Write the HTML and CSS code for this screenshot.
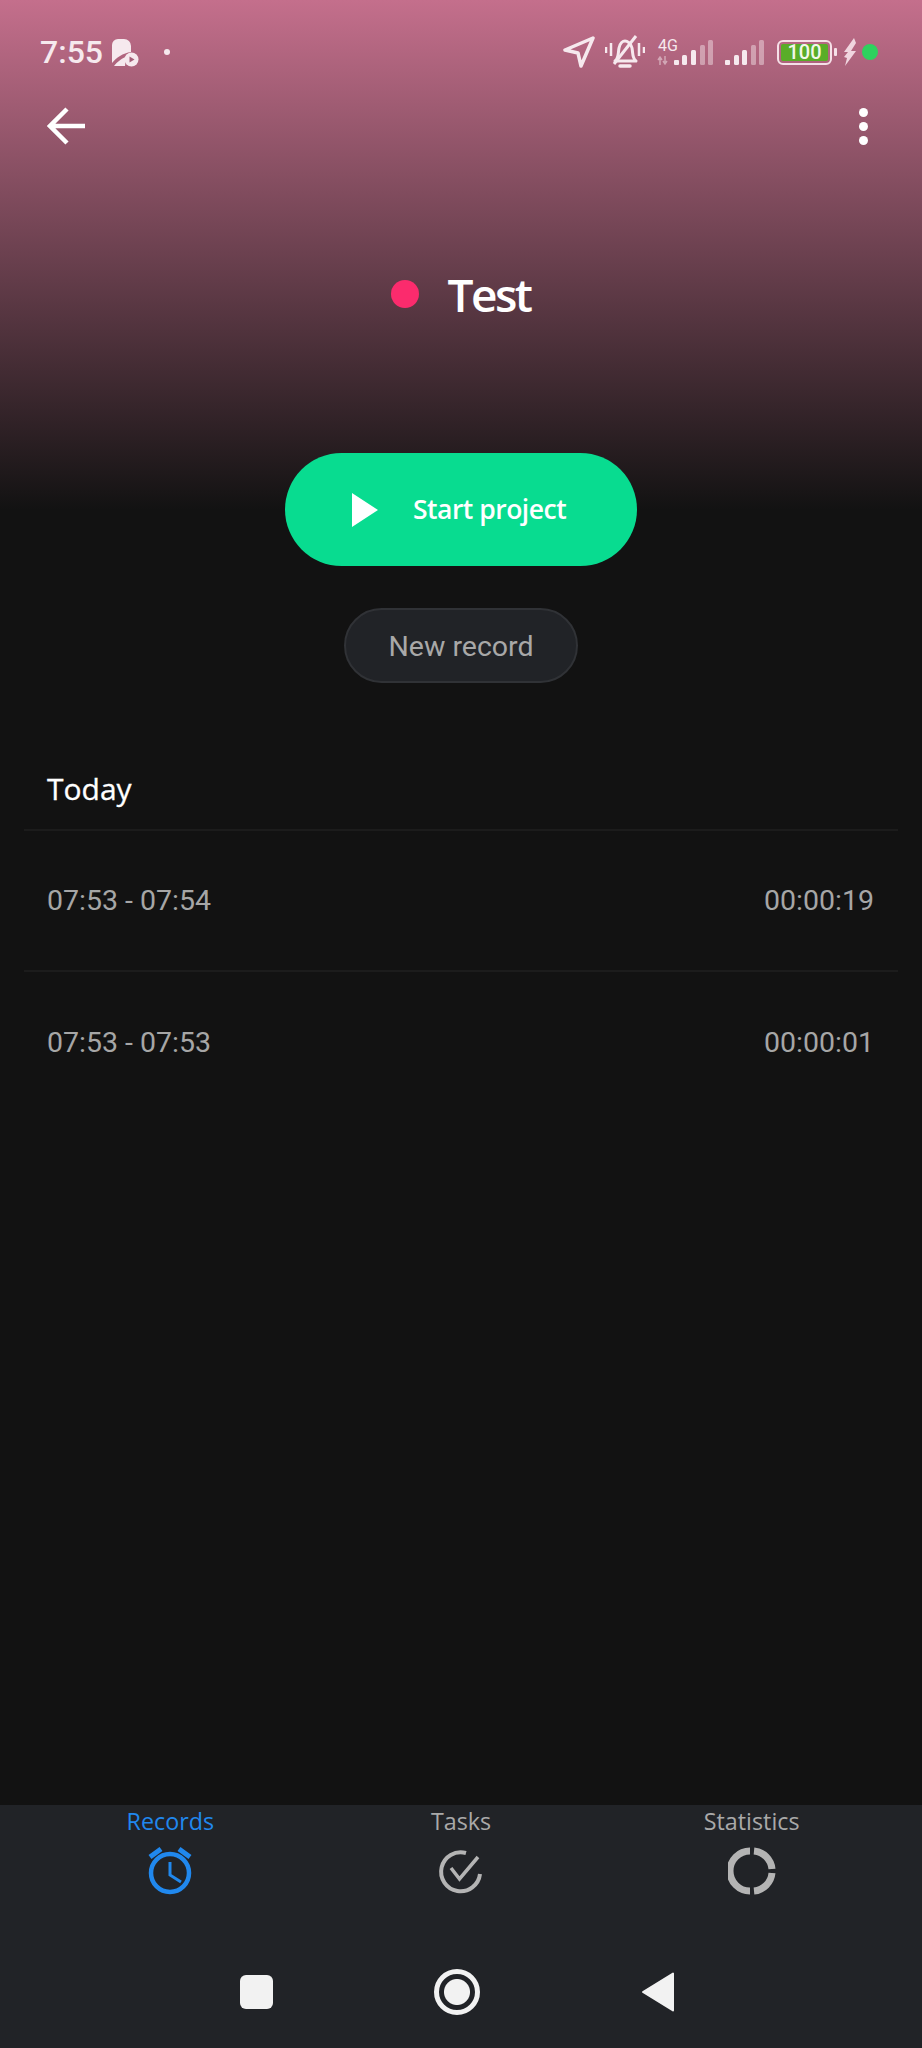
FILE: index.html
```html
<!DOCTYPE html>
<html>
<head>
<title>Test project</title>
<link rel="stylesheet" href="styles.css">
</head>
<body>

<div id="screen">

	<div class="status">
		<div class="status-left">
			<span class="clock">7:55</span>
			<svg class="ico-app" width="28" height="29" viewBox="0 0 28 29">
				<path d="M1 7a6 6 0 0 1 6-6h6a7 7 0 0 1 7 7v6c-8 1-15 6-19 11z" fill="#f6e9ee"/>
				<path d="M3 28c3-4 8-8 12-9l-1 9z" fill="#f6e9ee"/>
				<circle cx="20.500" cy="21.500" r="7" fill="#f6e9ee"/>
				<path d="M18.500 18.500l5 3-5 3z" fill="#a55f79"/>
			</svg>
			<i class="dot-small"></i>
		</div>
		<div class="status-right">
			<svg class="ico-loc" width="32" height="32" viewBox="0 0 32 32">
				<path d="M30 2L2 14l13 3 3 13z" fill="none" stroke="#f6e9ee" stroke-width="3.500" stroke-linejoin="round"/>
			</svg>
			<svg class="ico-bell" width="40" height="34" viewBox="0 0 40 34">
				<path d="M10 26c4-3 3-8 4-13 1-5 4-7 6-7s6 2 7 7c1 5 0 10 4 13z" fill="none" stroke="#f6e9ee" stroke-width="3" stroke-linejoin="round"/>
				<path d="M15 31h10" stroke="#f6e9ee" stroke-width="3.500" stroke-linecap="round"/>
				<path d="M31 1L9 29" stroke="#f6e9ee" stroke-width="3"/>
				<path d="M1 12v6M6 8v13M34 8v13M39 12v6" stroke="#f6e9ee" stroke-width="2.500"/>
			</svg>
			<div class="net">
				<span class="net-label">4G</span>
				<svg width="56" height="27" viewBox="0 0 56 27">
					<path d="M3 26v-7M1 21l2-3 2 3M8 17v7M6 22l2 3 2-3" fill="none" stroke="#f6e9ee" stroke-opacity=".5" stroke-width="1.500"/>
					<rect x="17" y="21" width="5" height="5" rx="1" fill="#f6e9ee"/>
					<rect x="25" y="16" width="5" height="10" rx="1.500" fill="#f6e9ee"/>
					<rect x="34" y="11" width="5" height="15" rx="1.500" fill="#f6e9ee"/>
					<rect x="43" y="6" width="5" height="20" rx="1.500" fill="#f6e9ee" opacity=".45"/>
					<rect x="51" y="1" width="5" height="25" rx="1.500" fill="#f6e9ee" opacity=".45"/>
				</svg>
			</div>
			<svg class="ico-sig" width="40" height="27" viewBox="0 0 40 27">
				<rect x="0" y="21" width="5" height="5" rx="1" fill="#f6e9ee"/>
				<rect x="9" y="16" width="5" height="10" rx="1.500" fill="#f6e9ee"/>
				<rect x="17" y="11" width="5" height="15" rx="1.500" fill="#f6e9ee"/>
				<rect x="26" y="6" width="5" height="20" rx="1.500" fill="#f6e9ee" opacity=".45"/>
				<rect x="34" y="1" width="5" height="25" rx="1.500" fill="#f6e9ee" opacity=".45"/>
			</svg>
			<div class="battery"><span>100</span></div>
			<i class="battery-tip"></i>
			<svg class="ico-bolt" width="14" height="28" viewBox="0 0 14 28">
				<path d="M11 0L1 14h4l-4 5 3 1-2 8 11-15H8l5-8z" fill="#f0d5df"/>
			</svg>
			<i class="dot-green"></i>
		</div>
	</div>

	<div class="toolbar">
		<svg width="40" height="40" viewBox="0 0 40 40">
			<path d="M38 20H3M20 3L3 20l17 17" fill="none" stroke="#fff" stroke-width="4.500"/>
		</svg>
		<div class="menu"><i></i><i></i><i></i></div>
	</div>

	<div class="title">
		<i class="title-dot"></i>
		<span>Test</span>
	</div>

	<div class="start">
		<svg width="26" height="34" viewBox="0 0 26 34"><path d="M0 0l26 17L0 34z" fill="#fff"/></svg>
		<span>Start project</span>
	</div>

	<div class="new-wrap"><div class="new-record">New record</div></div>

	<div class="day">Today</div>
	<div class="row"><span>07:53 - 07:54</span><span>00:00:19</span></div>
	<div class="row last"><span>07:53 - 07:53</span><span>00:00:01</span></div>

	<div class="grow"></div>

	<div class="tabs">
		<div class="tab active">
			<span>Records</span>
			<svg width="48" height="48" viewBox="0 0 48 48">
				<circle cx="24" cy="26" r="19" fill="none" stroke="#2088ee" stroke-width="4.500"/>
				<path d="M24 15v13l11 7" fill="none" stroke="#2088ee" stroke-width="3"/>
				<path d="M4 10L15 2M44 10L33 2" stroke="#2088ee" stroke-width="5"/>
			</svg>
		</div>
		<div class="tab">
			<span>Tasks</span>
			<svg width="48" height="48" viewBox="0 0 48 48">
				<path d="M29 6A19.500 19.500 0 1 0 43 27" fill="none" stroke="#b4b4b4" stroke-width="4"/>
				<path d="M14 21l8.500 11L41 10" fill="none" stroke="#b4b4b4" stroke-width="3.500"/>
			</svg>
		</div>
		<div class="tab">
			<span>Statistics</span>
			<svg width="48" height="48" viewBox="-24 -24 48 48">
				<path d="M-2-20A20 20 0 0 0-2 20M2-20A20 20 0 0 1 20-2M20 2A20 20 0 0 1 2 20" fill="none" stroke="#b4b4b4" stroke-width="7"/>
			</svg>
		</div>
	</div>

	<div class="sysnav">
		<div class="sys-key"><i class="sys-square"></i></div>
		<div class="sys-key"><i class="sys-home"></i></div>
		<div class="sys-key">
			<svg width="34" height="40" viewBox="0 0 34 40"><path d="M32 1.500v37L2 20z" fill="#f2f2f2" stroke="#f2f2f2" stroke-width="2" stroke-linejoin="round"/></svg>
		</div>
	</div>

</div>

</body>
</html>
```

FILE: styles.css
```css
* {
	box-sizing: border-box;
}
body {
	margin: 0;
	background: #121212;
}
i {
	display: block;
}
#screen {
	width: 922px;
	height: 2048px;
	display: flex;
	flex-direction: column;
	overflow: hidden;
	font-family: "Open Sans", sans-serif;
	background: linear-gradient(#c46f8c 0, #121212 510px);
}

/* status bar */
.status {
	height: 102px;
	display: flex;
	align-items: center;
	justify-content: space-between;
	padding: 2px 44px 0 40px;
}
.status-left, .status-right {
	display: flex;
	align-items: center;
}
.clock {
	font-family: Roboto, sans-serif;
	font-size: 32px;
	font-weight: 500;
	color: #f6e9ee;
	width: 71px;
}
.dot-small {
	width: 6px;
	height: 6px;
	border-radius: 50%;
	background: #f6e9ee;
	margin-left: 25px;
}
.ico-bell {
	margin-left: 10px;
}
.net {
	display: flex;
	flex-direction: column;
	margin-left: 12px;
	width: 56px;
	height: 28px;
}
.net svg {
	margin-top: -15px;
}
.net-label {
	font-family: Roboto, sans-serif;
	font-size: 16px;
	line-height: 16px;
	color: #f6e9ee;
	padding-left: 1px;
}
.ico-sig {
	margin-left: 12px;
	align-self: center;
}
.battery {
	width: 55px;
	height: 25px;
	margin-left: 12px;
	border: 2.500px solid #f6e0e8;
	border-radius: 6px;
	padding: 2px;
	display: flex;
}
.battery span {
	flex: 1;
	background: #59ad28;
	border-radius: 2px;
	font-family: Roboto, sans-serif;
	font-size: 20px;
	font-weight: 500;
	line-height: 16px;
	color: #f2f7ea;
	text-align: center;
}
.battery-tip {
	width: 3px;
	height: 8px;
	margin-left: 2px;
	background: #f6e0e8;
	border-radius: 1px;
}
.ico-bolt {
	margin-left: 6px;
}
.dot-green {
	width: 16px;
	height: 16px;
	border-radius: 50%;
	background: #2ed15e;
	margin-left: 5px;
}

/* toolbar */
.toolbar {
	height: 48px;
	display: flex;
	align-items: center;
	justify-content: space-between;
	padding: 0 54px 0 47px;
}
.menu {
	display: flex;
	flex-direction: column;
	gap: 5px;
}
.menu i {
	width: 9px;
	height: 9px;
	border-radius: 50%;
	background: #fff;
}

/* title + buttons */
.title {
	height: 60px;
	margin-top: 114px;
	display: flex;
	align-items: center;
	justify-content: center;
	gap: 28px;
	font-size: 46px;
	font-weight: 600;
	letter-spacing: -2.500px;
	color: #fff;
}
.title-dot {
	width: 28px;
	height: 28px;
	border-radius: 50%;
	background: #fb2b6d;
}
.start {
	width: 352px;
	height: 113px;
	margin: 129px auto 0;
	background: #08dc90;
	border-radius: 57px;
	display: flex;
	align-items: center;
	padding: 0 0 2px 67px;
	gap: 35px;
	font-size: 26.500px;
	font-weight: 600;
	letter-spacing: -0.500px;
	color: #fff;
}
.start svg {
	margin-top: 2px;
}
.new-wrap {
	display: flex;
	justify-content: center;
	margin-top: 42px;
}
.new-record {
	width: 234px;
	height: 75px;
	padding-top: 2px;
	background: #212327;
	border: 2px solid #303236;
	border-radius: 38px;
	display: flex;
	align-items: center;
	justify-content: center;
	font-family: Roboto, sans-serif;
	font-size: 28.500px;
	color: #a8a8a8;
}

/* record list */
.day {
	height: 148px;
	margin: 0 24px;
	padding: 86px 0 0 23px;
	border-bottom: 2px solid #1c1c1c;
	font-size: 30px;
	line-height: 40px;
	font-weight: 500;
	-webkit-text-stroke: 0.300px #fff;
	color: #fff;
}
.row {
	height: 141px;
	margin: 0 24px;
	padding: 0 24px 0 23px;
	display: flex;
	align-items: center;
	justify-content: space-between;
	border-bottom: 2px solid #1c1c1c;
	font-family: Roboto, sans-serif;
	font-size: 28.500px;
	color: #a6a6a6;
}
.row.last {
	border-bottom: 0;
}
.grow {
	flex: 1;
}

/* bottom tabs */
.tabs {
	height: 118px;
	background: #212327;
	display: grid;
	grid-template-columns: repeat(3, 1fr);
	padding: 0 25px;
}
.tab {
	display: flex;
	flex-direction: column;
	align-items: center;
	font-size: 23.300px;
	font-weight: 500;
	line-height: 32px;
	color: #a9a9a9;
	gap: 10px;
}
.tab.active {
	color: #2088ee;
}
.sysnav {
	height: 125px;
	background: #212327;
	display: grid;
	grid-template-columns: repeat(3, 201px);
	justify-content: center;
	padding: 13px 8px 0 0;
	align-items: center;
	justify-items: center;
}
.sys-key {
	display: flex;
}
.sys-square {
	width: 33px;
	height: 34px;
	background: #f2f2f2;
	border-radius: 6px;
}
.sys-home {
	width: 46px;
	height: 46px;
	border: 5px solid #f2f2f2;
	border-radius: 50%;
	background: radial-gradient(circle, #f2f2f2 12.500px, transparent 13.500px);
}
```
